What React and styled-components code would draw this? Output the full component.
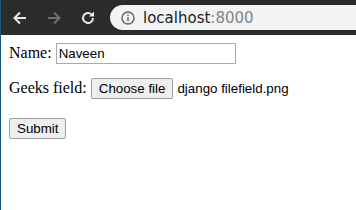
import styled, { createGlobalStyle } from "styled-components"

const Global = createGlobalStyle`
  html, body {
    margin: 0;
    padding: 0;
    background: #ffffff;
  }
  body {
    height: 210px;
    overflow: hidden;
    border-left: 1px solid #1d5a80;
  }
`

const Toolbar = styled.div`
  height: 35px;
  background: #2b2b2b;
  display: flex;
  align-items: center;
  padding-left: 2px;
`

const NavButton = styled.div`
  width: 34px;
  height: 34px;
  display: flex;
  align-items: center;
  justify-content: center;
  color: ${(p) => (p.dim ? "#6f6f6f" : "#e8e8e8")};
`

const Omnibox = styled.div`
  flex: 1;
  height: 25px;
  margin-left: 5px;
  background: #f1f3f4;
  border-radius: 13px 0 0 13px;
  display: flex;
  align-items: center;
  padding-left: 11px;
  font-family: "DejaVu Sans", sans-serif;
  font-size: 15px;
  color: #202124;
`

const Url = styled.span`
  margin-left: 8px;
`

const Port = styled.span`
  color: #80868b;
`

const Page = styled.form`
  padding: 7px 8px 0 8px;
  font-family: "Liberation Serif", serif;
  font-size: 16px;
  color: #000;
`

const Row = styled.p`
  margin: 0 0 ${(p) => p.below || 0}px 0;
  height: 22px;
  display: flex;
  align-items: center;
  gap: 4px;
`

const TextInput = styled.input`
  box-sizing: border-box;
  width: 180px;
  height: 21px;
  padding: 1px 2px;
  border: 1px solid #a9a9a9;
  font-family: "Liberation Sans", sans-serif;
  font-size: 13.33px;
  color: #000;
`

const Button = styled.button`
  box-sizing: border-box;
  height: 21px;
  font-family: "Liberation Sans", sans-serif;
  font-size: 13.33px;
  color: #000;
  background: #efefef;
  border: 1px solid #a0a0a0;
  border-radius: 2px;
  padding: 1px 7px;
`

const FileName = styled.span`
  font-family: "Liberation Sans", sans-serif;
  font-size: 13.33px;
`

const Back = () => (
  <svg width="16" height="16" viewBox="0 0 16 16" fill="none" stroke="currentColor" strokeWidth="2">
    <path d="M14 8H2.5M8 2.5L2.5 8L8 13.5" />
  </svg>
)

const Forward = () => (
  <svg width="16" height="16" viewBox="0 0 16 16" fill="none" stroke="currentColor" strokeWidth="2">
    <path d="M2 8h11.5M8 2.5L13.5 8L8 13.5" />
  </svg>
)

const Reload = () => (
  <svg width="16" height="16" viewBox="0 0 16 16" fill="none">
    <path d="M13 8a5 5 0 1 1-1.5-3.6" stroke="currentColor" strokeWidth="2" />
    <path d="M14 1.5v5h-5z" fill="currentColor" />
  </svg>
)

const Info = () => (
  <svg width="14" height="14" viewBox="0 0 14 14">
    <circle cx="7" cy="7" r="6" fill="none" stroke="#5f6368" strokeWidth="1.4" />
    <rect x="6.3" y="6" width="1.4" height="4.2" fill="#5f6368" />
    <rect x="6.3" y="3.6" width="1.4" height="1.4" fill="#5f6368" />
  </svg>
)

const App = () => {
  return (
    <>
      <Global />
      <Toolbar>
        <NavButton><Back /></NavButton>
        <NavButton dim><Forward /></NavButton>
        <NavButton><Reload /></NavButton>
        <Omnibox>
          <Info />
          <Url>localhost<Port>:8000</Port></Url>
        </Omnibox>
      </Toolbar>
      <Page onSubmit={(e) => e.preventDefault()}>
        <Row below={13}>
          <label>Name:</label>
          <TextInput defaultValue="Naveen" />
        </Row>
        <Row below={18}>
          <label>Geeks field:</label>
          <Button type="button">Choose file</Button>
          <FileName>django filefield.png</FileName>
        </Row>
        <Row>
          <Button type="submit">Submit</Button>
        </Row>
      </Page>
    </>
  )
}

export default App
